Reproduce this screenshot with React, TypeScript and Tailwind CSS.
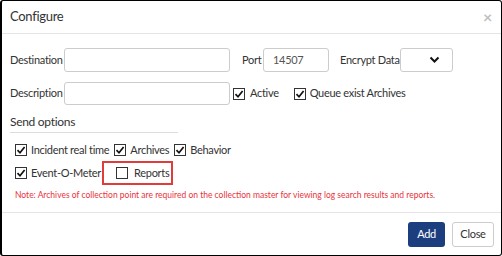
import React from "react";

const Check = ({ checked }: { checked: boolean }) => (
  <span className="inline-flex w-[12px] h-[12px] border border-[#333] bg-white items-center justify-center shrink-0">
    {checked && (
      <svg width="10" height="10" viewBox="0 0 10 10">
        <path d="M1.5 5.2 L4 7.8 L8.6 2" fill="none" stroke="#111" strokeWidth="1.7" />
      </svg>
    )}
  </span>
);

export default function App() {
  const font = { fontFamily: "Lato, 'Open Sans', sans-serif" };
  return (
    <div className="w-[502px] h-[256px] bg-white" style={font}>
      <div className="w-full h-full border border-l-2 border-black rounded-[3px] flex flex-col text-[#333] text-[11px] tracking-[-0.3px] whitespace-nowrap">
        <div className="h-[33px] shrink-0 flex items-center justify-between px-[8px] border-b border-[#e5e5e5]">
          <span className="text-[13px] text-[#333] tracking-[-0.3px]">Configure</span>
          <span className="text-[#c0c0c0] text-[16px] font-bold leading-none mr-[1px]">×</span>
        </div>
        <div className="flex-1 px-[8px] pt-[14px]">
          <div className="flex items-center h-[24px]">
            <span className="w-[54px]">Destination</span>
            <div className="w-[166px] h-[24px] border border-[#ccc] rounded-[3px]" />
            <span className="ml-[12px] w-[21px]">Port</span>
            <div className="w-[66px] h-[24px] border border-[#ccc] rounded-[3px] flex items-center pl-[9px] text-[#555]">14507</div>
            <span className="ml-[11px] w-[60px]">Encrypt Data</span>
            <div className="w-[53px] h-[24px] border border-[#ccc] rounded-[3px] flex items-center justify-end pr-[12px]">
              <svg width="11" height="8" viewBox="0 0 11 8">
                <path d="M1.5 1.5 L5.5 5.5 L9.5 1.5" fill="none" stroke="#111" strokeWidth="2" />
              </svg>
            </div>
          </div>
          <div className="flex items-center h-[23px] mt-[10px]">
            <span className="w-[54px]">Description</span>
            <div className="w-[166px] h-[23px] border border-[#ccc] rounded-[3px]" />
            <span className="ml-[3px] flex items-center gap-[5px]"><Check checked />Active</span>
            <span className="ml-[15px] flex items-center gap-[4px]"><Check checked />Queue exist Archives</span>
          </div>
          <div className="mt-[9px] w-[168px] border-b border-[#ddd] text-[12px] leading-[16px] pb-[2px]">Send options</div>
          <div className="flex items-center h-[16px] mt-[9px] pl-[5px]">
            <span className="flex items-center gap-[4px]"><Check checked />Incident real time</span>
            <span className="ml-[5px] flex items-center gap-[4px]"><Check checked />Archives</span>
            <span className="ml-[5px] flex items-center gap-[4px]"><Check checked />Behavior</span>
          </div>
          <div className="flex items-center h-[24px] mt-[3px] pl-[5px]">
            <span className="flex items-center gap-[4px]"><Check checked />Event-O-Meter</span>
            <span className="ml-[1px] h-[24px] border-2 border-[#e03c3c] flex items-center pl-[12px] pr-[2px] gap-[6px]"><Check checked={false} />Reports</span>
          </div>
          <div className="mt-[4px] pl-[5px] text-[8.5px] tracking-[0px] text-[#e8323c] leading-[12px]">Note: Archives of collection point are required on the collection master for viewing log search results and reports.</div>
        </div>
        <div className="h-[43px] shrink-0 border-t border-[#e5e5e5] flex items-center justify-end gap-[7px] pr-[7px]">
          <button className="h-[25px] w-[37px] bg-[#1d3e7e] text-white rounded-[3px] text-[11px]">Add</button>
          <button className="h-[25px] w-[42px] bg-white border border-[#ccc] text-[#333] rounded-[3px] text-[11px]">Close</button>
        </div>
      </div>
    </div>
  );
}
